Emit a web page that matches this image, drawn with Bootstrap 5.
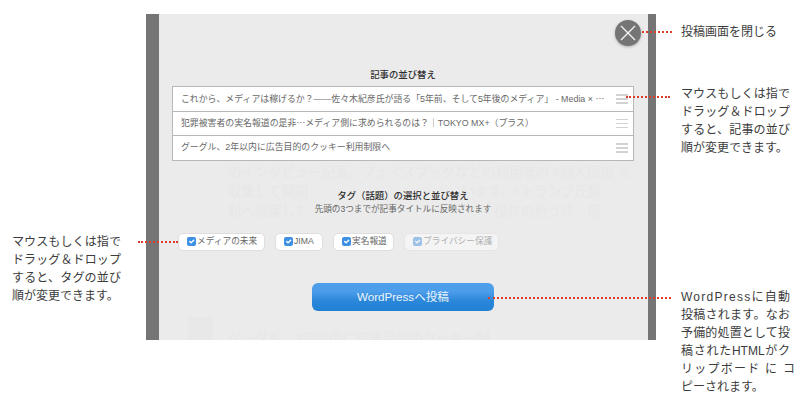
<!DOCTYPE html>
<html lang="ja">
<head>
<meta charset="utf-8">
<title>投稿画面</title>
<link href="https://cdn.jsdelivr.net/npm/bootstrap@5.3.0/dist/css/bootstrap.min.css" rel="stylesheet">
<style>
html,body{margin:0;background:#fff;overflow:hidden}
body{font-family:"Liberation Sans","Noto Sans CJK JP",sans-serif;color:#3a3a3a}
.stage{width:800px;height:407px;position:relative}
.side-left{width:146px;flex:none;padding:233px 0 0 12px}
.side-right{width:144px;flex:none;padding:23px 0 0 25px}
.note{font-size:12px;line-height:18px;width:109px;letter-spacing:0;color:#3c3c3c}
.ln{display:block;white-space:nowrap;text-align:justify;text-align-last:justify;text-justify:inter-character}
.ln-end{display:block;white-space:nowrap}
.ln-wide{display:block;white-space:nowrap;letter-spacing:1.25px}
.note-b{margin-top:44px}
.note-c{margin-top:131px}
.note-a{height:18px}
.panel{width:510px;height:326px;flex:none;margin-top:14px;background:#ebebeb;border-left:13px solid #757575;border-right:8px solid #757575;position:relative;overflow:hidden}
.ghost{position:absolute;left:69px;top:149px;width:373px;font-size:13.4px;line-height:19.3px;color:#e7e7e7;white-space:nowrap}
.ghost-b{position:absolute;left:69px;top:316px;font-size:13.4px;line-height:18px;color:#e7e7e7;white-space:nowrap}
.ghost-i{position:absolute;left:29px;top:303px;width:25px;height:26px;background:#e8e8e8}
.inner{position:relative;padding:54px 14px 0 13px}
.ttl{font-size:9.4px;line-height:14px;font-weight:500;color:#2e2e2e;text-align:center;margin:0}
.art-list{margin-top:4px;border-radius:0}
.art-list .list-group-item{height:25.6px;padding:0 5px 0 8px;border:1px solid #b7b7b7;margin-top:-1px;background:#fff;font-size:8.9px;color:#686868;border-radius:0;display:flex;align-items:center;justify-content:space-between;white-space:nowrap}
.art-list .list-group-item:first-child{margin-top:0}
.cjk{font-family:"Noto Sans CJK JP",sans-serif}
.grip{width:12px;height:9.5px;flex:none;display:flex;flex-direction:column;justify-content:space-between}
.grip span{display:block;height:1.5px;background:#d2d2d2}
.ttl-tag{margin-top:28px}
.sub{font-size:8.6px;line-height:13px;color:#666;text-align:center;margin:0}
.chips{margin:17px 0 0 5.5px;gap:10px}
.chip{height:18px;background:#fff;border:1px solid #dedede;border-radius:5px;font-size:8.7px;color:#666;padding:0 0 0 8px;gap:1.5px;margin:0}
.chip .form-check-input{width:9px;height:9px;margin:0;flex:none;border:0;border-radius:2px;background-color:#3d90e4}
.c1{width:87px}
.c2{width:48px}
.c3{width:61px}
.c4{width:95px}
.chip-off{opacity:.45}
.btn-post{display:block;width:182px;height:28px;margin:32px auto 0;padding:0;background:linear-gradient(#4c9dea,#4c9dea 30%,#2a86d8 65%,#2180d6);border:0;border-radius:6px;color:#eef5fc;font-size:11.6px;line-height:28px}
.closer{position:absolute;left:456px;top:6px;width:26px;height:26px;padding:0;border:0;border-radius:50%;background:#757575;box-shadow:0 1px 3px rgba(0,0,0,.25);display:flex;align-items:center;justify-content:center}
.leader{position:absolute;height:0;border-top:2px dotted #dd3b30}
.l1{left:642px;top:31px;width:30px}
.l2{left:626px;top:96px;width:44px}
.l3{left:138px;top:241px;width:40px}
.l4{left:488px;top:297px;width:183px}
</style>
</head>
<body>
<div class="stage d-flex align-items-start">
  <div class="side-left">
    <p class="note mb-0"><span class="ln">マウスもしくは指で</span><span class="ln">ドラッグ＆ドロップ</span><span class="ln">すると、タグの並び</span><span class="ln-end">順が変更できます。</span></p>
  </div>
  <div class="panel">
    <div class="ghost">
      <div>のインタビュー記事。フェイスブックなどの利用者の #個人情報 を</div>
      <div class="d-flex justify-content-between"><span>収集して展開</span><span>います。/ トランプ氏勝</span></div>
      <div class="d-flex justify-content-between"><span>利へ暗躍した</span><span>操作の危うさ　前</span></div>
    </div>
    <div class="ghost-i"></div>
    <div class="ghost-b">グーグル、2年以内に広告目的のクッキー制</div>
    <button type="button" class="closer" aria-label="閉じる">
      <svg width="18" height="18" viewBox="0 0 18 18"><path d="M2 2 16 16M16 2 2 16" stroke="#f2f2f2" stroke-width="1.4" fill="none"/></svg>
    </button>
    <div class="inner">
      <h2 class="ttl">記事の並び替え</h2>
      <ul class="list-group art-list">
        <li class="list-group-item"><span>これから、メディアは稼げるか？――佐々木紀彦氏が語る「5年前、そして5年後のメディア」 - Media × <span class="cjk">…</span></span><span class="grip"><span></span><span></span><span></span></span></li>
        <li class="list-group-item"><span>犯罪被害者の実名報道の是非<span class="cjk">…</span>メディア側に求められるのは？｜TOKYO MX+（プラス）</span><span class="grip"><span></span><span></span><span></span></span></li>
        <li class="list-group-item"><span>グーグル、2年以内に広告目的のクッキー利用制限へ</span><span class="grip"><span></span><span></span><span></span></span></li>
      </ul>
      <h2 class="ttl ttl-tag">タグ（話題）の選択と並び替え</h2>
      <p class="sub">先頭の3つまでが記事タイトルに反映されます</p>
      <div class="chips d-flex align-items-center">
        <label class="chip c1 d-inline-flex align-items-center"><input class="form-check-input" type="checkbox" checked>メディアの未来</label>
        <label class="chip c2 d-inline-flex align-items-center"><input class="form-check-input" type="checkbox" checked>JIMA</label>
        <label class="chip c3 d-inline-flex align-items-center"><input class="form-check-input" type="checkbox" checked>実名報道</label>
        <label class="chip c4 chip-off d-inline-flex align-items-center"><input class="form-check-input" type="checkbox" checked>プライバシー保護</label>
      </div>
      <button type="button" class="btn btn-primary btn-post">WordPressへ投稿</button>
    </div>
  </div>
  <div class="side-right">
    <p class="note note-a mb-0 text-nowrap">投稿画面を閉じる</p>
    <p class="note note-b mb-0"><span class="ln">マウスもしくは指で</span><span class="ln">ドラッグ＆ドロップ</span><span class="ln">すると、記事の並び</span><span class="ln-end">順が変更できます。</span></p>
    <p class="note note-c mb-0"><span class="ln-wide">WordPressに自動</span><span class="ln">投稿されます。なお</span><span class="ln">予備的処置として投</span><span class="ln">稿されたHTMLがク</span><span class="ln-wide">リップボード に コ</span><span class="ln-end">ピーされます。</span></p>
  </div>
  <div class="leader l1"></div>
  <div class="leader l2"></div>
  <div class="leader l3"></div>
  <div class="leader l4"></div>
</div>
</body>
</html>
